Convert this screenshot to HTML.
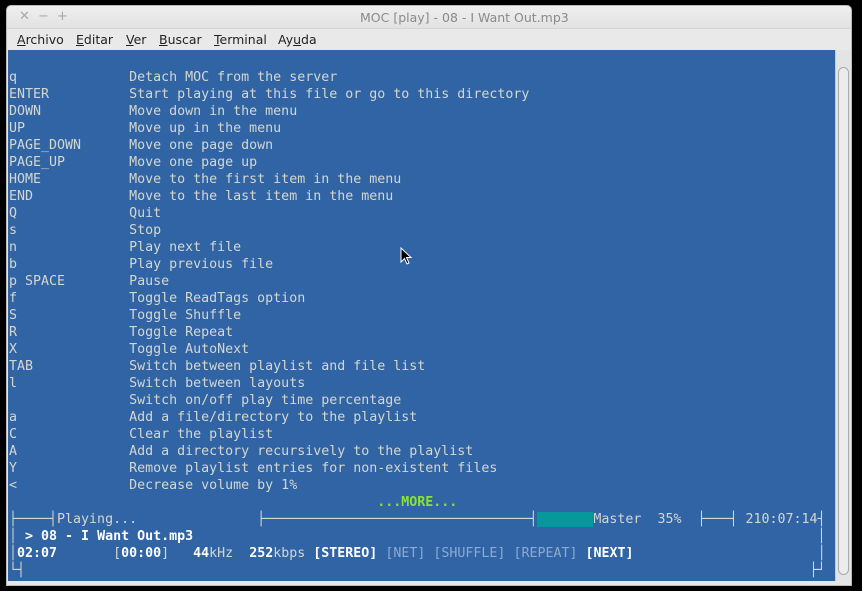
<!DOCTYPE html>
<html><head><meta charset="utf-8"><style>
*{margin:0;padding:0;box-sizing:border-box}
body{width:862px;height:591px;background:#000;position:relative;overflow:hidden;font-family:"DejaVu Sans","Liberation Sans",sans-serif}
.win{position:absolute;left:6px;top:5px;width:846px;height:581px;background:#e6e6e6;border-radius:5px 5px 0 0;border:1px solid #bbb}
.title{position:absolute;left:0;top:0;width:100%;height:23px;background:linear-gradient(#efefef,#e2e2e2);border-radius:5px 5px 0 0;border-bottom:1px solid #d6d6d6}
.title .t{position:absolute;left:353px;top:4px;font-size:12.5px;color:#8a8a8a}
.title .b{position:absolute;top:3px;font-size:13px;color:#aaa}
.menu{position:absolute;left:0;top:23px;width:100%;height:22px;background:#e9e9e9;font-size:12.5px;color:#222}
.menu span{position:absolute;top:3px}
.term{position:absolute;left:8px;top:50px;width:827px;height:531px;background:#3164a5;overflow:hidden}
.sb{position:absolute;left:835px;top:50px;width:15px;height:531px;background:#e4e4e4;border-left:1px solid #ccc}
.sb div{position:absolute;left:2px;top:17px;width:11px;height:508px;border:1px solid #aaa;border-radius:6px;background:#ececec}
pre{position:absolute;left:1px;font-family:"DejaVu Sans Mono","Liberation Mono",monospace;font-size:13.3px;line-height:17px;color:#d3d7cf;white-space:pre}
.w{color:#fff;font-weight:bold}
.d{color:#8ea9cf}
.g{color:#8ae234;font-weight:bold}
.tl{background:#06989a}
</style></head><body>
<div class="win">
<div class="title"><span class="b" style="left:12px">✕</span><span class="b" style="left:31px">−</span><span class="b" style="left:50px">+</span><span class="t">MOC [play] - 08 - I Want Out.mp3</span></div>
<div class="menu"><span style="left:10px"><u>A</u>rchivo</span><span style="left:69px"><u>E</u>ditar</span><span style="left:119px"><u>V</u>er</span><span style="left:152px"><u>B</u>uscar</span><span style="left:207px"><u>T</u>erminal</span><span style="left:271px">Ay<u>u</u>da</span></div>
</div>
<div class="term">
<pre style="top:19px">q              Detach MOC from the server
ENTER          Start playing at this file or go to this directory
DOWN           Move down in the menu
UP             Move up in the menu
PAGE_DOWN      Move one page down
PAGE_UP        Move one page up
HOME           Move to the first item in the menu
END            Move to the last item in the menu
Q              Quit
s              Stop
n              Play next file
b              Play previous file
p SPACE        Pause
f              Toggle ReadTags option
S              Toggle Shuffle
R              Toggle Repeat
X              Toggle AutoNext
TAB            Switch between playlist and file list
l              Switch between layouts
               Switch on/off play time percentage
a              Add a file/directory to the playlist
C              Clear the playlist
A              Add a directory recursively to the playlist
Y              Remove playlist entries for non-existent files
<              Decrease volume by 1%
                                              <span class="g">...MORE...</span>
├────┤Playing...               ├─────────────────────────────────┤<span class="tl">       </span>Master  35%  ├───┤ 210:07:14┤
│ <span class="w">&gt; 08 - I Want Out.mp3</span>                                                                              │
│<span class="w">02:07</span>       [<span class="w">00:00</span>]   <span class="w">44</span>kHz  <span class="w">252</span>kbps <span class="w">[STEREO]</span> <span class="d">[NET]</span> <span class="d">[SHUFFLE]</span> <span class="d">[REPEAT]</span> <span class="w">[NEXT]</span>                       │
└┤                                                                                                  ├┘</pre>
<svg style="position:absolute;left:392px;top:197px" width="14" height="20" viewBox="0 0 14 20"><path d="M1 1 L1 15 L4.5 11.5 L7 17 L9 16 L6.5 10.5 L11 10.5 Z" fill="#000" stroke="#fff" stroke-width="1"/></svg>
</div>
<div class="sb"><div></div></div>
</body></html>
